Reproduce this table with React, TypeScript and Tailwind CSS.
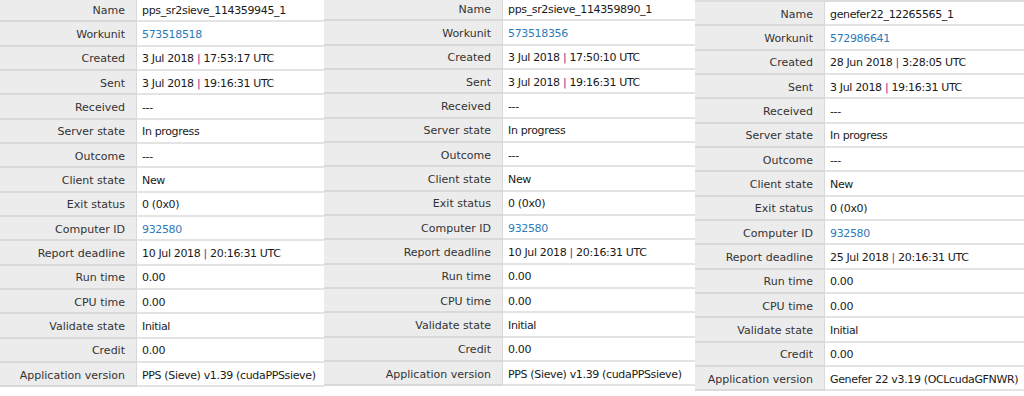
import React from "react";

type Row = { label: string; value: React.ReactNode };

const Sep = () => <span className="text-[#8b2a8b]">|</span>;
const Link = ({ children }: { children: React.ReactNode }) => (
  <span className="text-[#2e7bb8]">{children}</span>
);

function date(d: string, t: string) {
  return (
    <span>
      {d} <Sep /> {t}
    </span>
  );
}

function makeRows(
  name: string,
  wu: string,
  created: React.ReactNode,
  deadline: React.ReactNode,
  app: string
): Row[] {
  return [
    { label: "Name", value: name },
    { label: "Workunit", value: <Link>{wu}</Link> },
    { label: "Created", value: created },
    { label: "Sent", value: date("3 Jul 2018", "19:16:31 UTC") },
    { label: "Received", value: "---" },
    { label: "Server state", value: "In progress" },
    { label: "Outcome", value: "---" },
    { label: "Client state", value: "New" },
    { label: "Exit status", value: "0 (0x0)" },
    { label: "Computer ID", value: <Link>932580</Link> },
    { label: "Report deadline", value: deadline },
    { label: "Run time", value: "0.00" },
    { label: "CPU time", value: "0.00" },
    { label: "Validate state", value: "Initial" },
    { label: "Credit", value: "0.00" },
    { label: "Application version", value: app },
  ];
}

const rows1 = makeRows(
  "pps_sr2sieve_114359945_1",
  "573518518",
  date("3 Jul 2018", "17:53:17 UTC"),
  date("10 Jul 2018", "20:16:31 UTC"),
  "PPS (Sieve) v1.39 (cudaPPSsieve)"
);
const rows2 = makeRows(
  "pps_sr2sieve_114359890_1",
  "573518356",
  date("3 Jul 2018", "17:50:10 UTC"),
  date("10 Jul 2018", "20:16:31 UTC"),
  "PPS (Sieve) v1.39 (cudaPPSsieve)"
);
const rows3 = makeRows(
  "genefer22_12265565_1",
  "572986641",
  date("28 Jun 2018", "3:28:05 UTC"),
  date("25 Jul 2018", "20:16:31 UTC"),
  "Genefer 22 v3.19 (OCLcudaGFNWR)"
);

function Panel({
  rows,
  labelW,
  valueW,
  top,
}: {
  rows: Row[];
  labelW: string;
  valueW: string;
  top: string;
}) {
  return (
    <div className={`flex flex-col shrink-0 ${top}`}>
      {rows.map((r, i) => (
        <div key={i} className="flex h-[24.33px] shrink-0">
          <div
            className={`${labelW} shrink-0 bg-[#ececec] border-b-2 border-r border-[#d9d9d9] flex items-center justify-end pr-[11px] pt-[2px] text-[#333333] whitespace-nowrap`}
          >
            {r.label}
          </div>
          <div
            className={`${valueW} shrink-0 bg-white border-b-2 border-[#e4e4e4] flex items-center pl-[5px] pt-[2px] text-[#1a1a1a] whitespace-nowrap overflow-hidden tracking-[-0.35px]`}
          >
            <span>{r.value}</span>
          </div>
        </div>
      ))}
    </div>
  );
}

export default function App() {
  return (
    <div
      className="w-[1024px] h-[396px] bg-white overflow-hidden flex items-start text-[11px] leading-none"
      style={{ fontFamily: '"DejaVu Sans", Verdana, sans-serif' }}
    >
      <Panel rows={rows1} labelW="w-[137px]" valueW="w-[187px]" top="-mt-[2px]" />
      <Panel rows={rows2} labelW="w-[179px]" valueW="w-[192px]" top="-mt-[3px]" />
      <div className="flex flex-col shrink-0 border-t-2 border-[#dcdcdc] mt-[0px]">
        <Panel rows={rows3} labelW="w-[130px]" valueW="w-[220px]" top="" />
      </div>
    </div>
  );
}
